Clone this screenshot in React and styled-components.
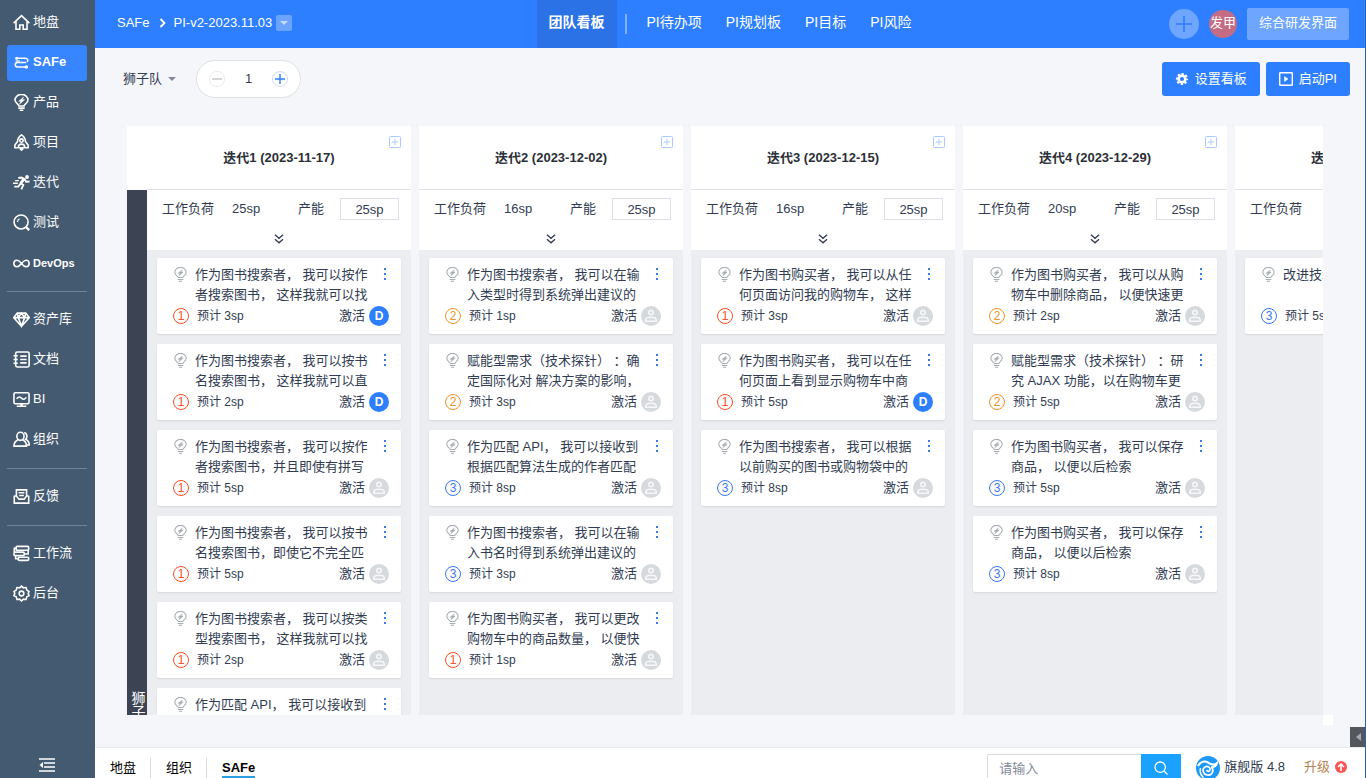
import { useState } from "react";
import styled, { createGlobalStyle, css } from "styled-components";

const teams = [
  {
    title: "迭代1 (2023-11-17)",
    load: "25sp",
    capacity: "25sp",
    cards: [
      { text: "作为图书搜索者， 我可以按作\n者搜索图书， 这样我就可以找", pri: 1, sp: "3sp", user: "D" },
      { text: "作为图书搜索者， 我可以按书\n名搜索图书， 这样我就可以直", pri: 1, sp: "2sp", user: "D" },
      { text: "作为图书搜索者， 我可以按作\n者搜索图书，并且即使有拼写", pri: 1, sp: "5sp" },
      { text: "作为图书搜索者， 我可以按书\n名搜索图书，即使它不完全匹", pri: 1, sp: "5sp" },
      { text: "作为图书搜索者， 我可以按类\n型搜索图书， 这样我就可以找", pri: 1, sp: "2sp" },
      { text: "作为匹配 API， 我可以接收到\n根据匹配算法生成的作者匹配", pri: 1, sp: "8sp" },
    ],
  },
  {
    title: "迭代2 (2023-12-02)",
    load: "16sp",
    capacity: "25sp",
    cards: [
      { text: "作为图书搜索者， 我可以在输\n入类型时得到系统弹出建议的", pri: 2, sp: "1sp" },
      { text: "赋能型需求（技术探针） ：确\n定国际化对 解决方案的影响，", pri: 2, sp: "3sp" },
      { text: "作为匹配 API， 我可以接收到\n根据匹配算法生成的作者匹配", pri: 3, sp: "8sp" },
      { text: "作为图书搜索者， 我可以在输\n入书名时得到系统弹出建议的", pri: 3, sp: "3sp" },
      { text: "作为图书购买者， 我可以更改\n购物车中的商品数量， 以便快", pri: 1, sp: "1sp" },
    ],
  },
  {
    title: "迭代3 (2023-12-15)",
    load: "16sp",
    capacity: "25sp",
    cards: [
      { text: "作为图书购买者， 我可以从任\n何页面访问我的购物车， 这样", pri: 1, sp: "3sp" },
      { text: "作为图书购买者， 我可以在任\n何页面上看到显示购物车中商", pri: 1, sp: "5sp", user: "D" },
      { text: "作为图书搜索者， 我可以根据\n以前购买的图书或购物袋中的", pri: 3, sp: "8sp" },
    ],
  },
  {
    title: "迭代4 (2023-12-29)",
    load: "20sp",
    capacity: "25sp",
    cards: [
      { text: "作为图书购买者， 我可以从购\n物车中删除商品， 以便快速更", pri: 2, sp: "2sp" },
      { text: "赋能型需求（技术探针） ：研\n究 AJAX 功能，以在购物车更", pri: 2, sp: "5sp" },
      { text: "作为图书购买者， 我可以保存\n商品， 以便以后检索", pri: 3, sp: "5sp" },
      { text: "作为图书购买者， 我可以保存\n商品， 以便以后检索", pri: 3, sp: "8sp" },
    ],
  },
  {
    title: "迭代5 (2024-01-12)",
    load: "5sp",
    capacity: "25sp",
    cards: [{ text: "改进技术方案", pri: 3, sp: "5sp" }],
  },
];

const menu = [
  [
    { icon: "home", label: "地盘" },
    { icon: "safe", label: "SAFe", active: true },
    { icon: "bulb", label: "产品" },
    { icon: "rocket", label: "项目" },
    { icon: "run", label: "迭代" },
    { icon: "search", label: "测试" },
    { icon: "infinity", label: "DevOps", narrow: true },
  ],
  [
    { icon: "diamond", label: "资产库" },
    { icon: "doc", label: "文档" },
    { icon: "bi", label: "BI" },
    { icon: "people", label: "组织" },
  ],
  [{ icon: "mail", label: "反馈" }],
  [
    { icon: "flow", label: "工作流" },
    { icon: "gear", label: "后台" },
  ],
];

const shapes = {
  home: <path d="M.6 8.600 8 1.600l7.400 7M2.800 7v7.400h3.600v-4h3.200v4h3.600V7" />,
  safe: (
    <>
      <path d="M3.500 4h8.400a2 2 0 0 1 1.600 3.200M12.500 8H4.200a2.100 2.100 0 0 0 0 4.200h8" />
      <circle cx="3.500" cy="4" r="1.500" fill="currentColor" stroke="none" />
      <circle cx="12.600" cy="12.200" r="1.600" fill="currentColor" stroke="none" />
      <path d="M2.500 6.600h4" strokeWidth="1.200" />
    </>
  ),
  bulb: (
    <>
      <path d="M5.600 11.300C5.600 9.600 1.900 8.800 1.900 5.700a6.100 5.300 0 0 1 12.200 0c0 3.100-3.700 3.900-3.700 5.600z" />
      <path d="M5 13.300h6M6.300 15.300h3.400" />
      <path d="M10 2.800 5.300 6.900h2L6.100 9.600l4.900-4.300H8.900z" fill="currentColor" strokeWidth="0.400" />
    </>
  ),
  rocket: (
    <>
      <path d="M8 .8c2.600 1.700 3.700 4 3.700 6.200l2.500 3.300v2.600H1.800v-2.600L4.300 7C4.300 4.800 5.400 2.500 8 .8z" />
      <circle cx="8" cy="6.200" r="1.600" />
      <path d="M5 12.500c0-2 1-3 3-3s3 1 3 3" />
      <path d="M6.300 12.800h3.400v2L8 16l-1.700-1.200z" fill="currentColor" stroke="none" />
    </>
  ),
  run: (
    <>
      <circle cx="13.200" cy="2.800" r="1.800" fill="currentColor" stroke="none" />
      <path d="M5 3.700 8 3.300l2.800 1.500-3.400 4 2.300 1.600-1.900 4M10.800 4.800l1.600 2.600 3.200-.3M7 9.300l-2 2.600H1.200" strokeWidth="1.800" />
      <path d="M9 4 6 8.500l1.600 1.300L12 5z" fill="currentColor" stroke="none" />
      <path d="M2 6.200h3.500M0 8.700h4.500" strokeWidth="1.200" />
    </>
  ),
  search: (
    <>
      <circle cx="7.600" cy="7.500" r="6.600" />
      <path d="M12.200 12.200l3 3" strokeWidth="2.200" />
      <path d="M4.200 7.500a3.300 3.300 0 0 1 2-3" strokeWidth="1.200" />
    </>
  ),
  infinity: <path d="M8 8C6.700 6.300 5.400 5 3.800 5a3 3 0 0 0 0 6C5.400 11 6.700 9.700 8 8s2.600-3 4.200-3a3 3 0 0 1 0 6C10.600 11 9.300 9.700 8 8z" />,
  diamond: (
    <path d="M4 2h8l3.300 4.200L8 14.500.7 6.200zM.7 6.200h14.600M5 6.200l3 8 3-8L8 2 5 6.200 4 2M11 6.200 12 2" />
  ),
  doc: (
    <>
      <rect x="2.500" y="1" width="12.700" height="14" rx="1.500" />
      <path d="M.5 4.500h4M.5 8h4M.5 11.500h4M6.800 4.800h6M6.800 8h6M6.800 11.200h6" />
    </>
  ),
  bi: (
    <>
      <rect x=".9" y="1.600" width="14.200" height="10.400" rx="1.300" />
      <path d="M3.500 7.500c1.500-2.600 3-2.200 4.500-.8s3 1.500 4.500-.7M3.500 14.400h9" />
      <path d="M8 12v2" strokeWidth="2.500" />
    </>
  ),
  people: (
    <>
      <ellipse cx="7" cy="5" rx="3.400" ry="3.800" />
      <path d="M4.800 8.200C2.500 9.200.9 11 .9 14.200h11.800c0-3.200-1.500-5-3.700-6M10.500 1.500c2.600.3 3.600 4.300 1.300 6.300 2.300 1 3.400 3 3.500 5.400h-2" />
    </>
  ),
  mail: (
    <>
      <path d="M3.200 7.500V1.800h9.600v5.700M1.200 7.200v7h13.600v-7M1.200 7.500h2l2.300 3h5l2.300-3h2" />
      <path d="M5.300 4.500h5.400M5.800 7h4.400" />
    </>
  ),
  flow: (
    <>
      <rect x="3" y="1.300" width="11.700" height="3.700" rx=".8" />
      <rect x="1" y="6.700" width="9.500" height="3.300" rx=".8" />
      <rect x="5" y="11.500" width="9.700" height="3" rx=".8" />
      <path d="M3 3.200H1.200v3.500M10.500 8.400h3.800V5M2.500 10v3H5" />
    </>
  ),
  gear: (
    <>
      <path d="M8 1l1.800 1.700 2.500-.3.700 2.400 2.100 1.300L14.300 8l.8 2-2.100 1.200-.7 2.400-2.500-.3L8 15l-1.800-1.700-2.500.3-.7-2.400L.9 10l.8-2-.8-1.900L3 4.800l.7-2.400 2.500.3z" />
      <circle cx="8" cy="8" r="2.200" />
    </>
  ),
};

function Icon({ name, size = 17, weight = 1.5 }) {
  return (
    <svg width={size} height={size} viewBox="0 0 16 16" fill="none" stroke="currentColor" strokeWidth={weight} aria-hidden="true">
      {shapes[name]}
    </svg>
  );
}

function StoryCard({ card }) {
  return (
    <Card>
      <CardTop>
        <BulbSlot><Icon name="bulb" size={15} weight={1.1} /></BulbSlot>
        <CardText>{card.text}</CardText>
        <DotsButton aria-label="更多">
          <svg width="4" height="14" viewBox="0 0 4 14" fill="currentColor">
            <rect x="1" y="1" width="2" height="2" />
            <rect x="1" y="6" width="2" height="2" />
            <rect x="1" y="11" width="2" height="2" />
          </svg>
        </DotsButton>
      </CardTop>
      <CardFoot>
        <Priority $level={card.pri}>{card.pri}</Priority>
        <Estimate>预计 {card.sp}</Estimate>
        <Status>激活</Status>
        <Assignee $on={Boolean(card.user)}>
          {card.user || (
            <svg width="14" height="14" viewBox="0 0 14 14" fill="none" stroke="#f6f7f8" strokeWidth="1.600">
              <circle cx="7" cy="3.600" r="2.200" />
              <path d="M1.800 12.200v-1.400c0-1.600 1.600-2.600 5.200-2.600s5.200 1 5.200 2.600v1.400z" />
            </svg>
          )}
        </Assignee>
      </CardFoot>
    </Card>
  );
}

function Column({ data }) {
  const [capacity, setCapacity] = useState(data.capacity);
  return (
    <Col>
      <ColHead>
        {data.title}
        <AddCard aria-label="添加">
          <svg width="12" height="12" viewBox="0 0 12 12" fill="none" stroke="currentColor">
            <rect x=".5" y=".5" width="11" height="11" rx="1" />
            <path d="M3 6h6M6 3v6" />
          </svg>
        </AddCard>
      </ColHead>
      <Meta>
        <MetaRow>
          <span>工作负荷</span>
          <Load>{data.load}</Load>
          <span>产能</span>
          <Capacity aria-label="产能" value={capacity} onChange={(e) => setCapacity(e.target.value)} />
        </MetaRow>
        <Expand aria-label="展开">
          <svg width="10" height="10" viewBox="0 0 10 10" fill="none" stroke="currentColor" strokeWidth="1.300">
            <path d="M1 .8l4 3.500L9 .8M1 5.300l4 3.500 4-3.500" />
          </svg>
        </Expand>
      </Meta>
      <ColBody>
        {data.cards.map((card, i) => (
          <StoryCard key={i} card={card} />
        ))}
      </ColBody>
    </Col>
  );
}

function App() {
  const [level, setLevel] = useState(1);
  return (
    <Page>
      <GlobalStyle />
      <Sidebar>
        {menu.map((group, i) => (
          <MenuGroup key={i}>
            {group.map((item) => (
              <li key={item.label}>
                <MenuLink href="#" $active={item.active} $narrow={item.narrow}>
                  <Icon name={item.icon} />
                  <span>{item.label}</span>
                </MenuLink>
              </li>
            ))}
          </MenuGroup>
        ))}
        <FoldButton aria-label="收起">
          <svg width="16" height="14" viewBox="0 0 16 14" fill="none" stroke="currentColor" strokeWidth="1.700">
            <path d="M0 1h16M5 5h11M5 9h11M0 13h16" />
            <path d="M4 4v6L.5 7z" fill="currentColor" stroke="none" />
          </svg>
        </FoldButton>
      </Sidebar>
      <Main>
        <Header>
          <Crumbs>
            <a href="#">SAFe</a>
            <svg width="7" height="10" viewBox="0 0 7 10" fill="none" stroke="currentColor" strokeWidth="1.800">
              <path d="M1.500 1l4 4-4 4" />
            </svg>
            <a href="#">PI-v2-2023.11.03</a>
            <CrumbCaret aria-label="切换">
              <svg width="8" height="4" viewBox="0 0 8 4" fill="currentColor"><path d="M0 0h8L4 4z" /></svg>
            </CrumbCaret>
          </Crumbs>
          <Tabs>
            <Tab href="#" $active>团队看板</Tab>
            <TabLine />
            <Tab href="#">PI待办项</Tab>
            <Tab href="#">PI规划板</Tab>
            <Tab href="#">PI目标</Tab>
            <Tab href="#">PI风险</Tab>
          </Tabs>
          <HeadRight>
            <CreateButton aria-label="新建">
              <svg width="16" height="16" viewBox="0 0 16 16" stroke="currentColor" strokeWidth="1.600"><path d="M0 8h16M8 0v16" /></svg>
            </CreateButton>
            <UserButton>发甲</UserButton>
            <ModeButton>综合研发界面</ModeButton>
          </HeadRight>
        </Header>
        <Toolbar>
          <TeamPick>
            <select aria-label="团队"><option>狮子队</option></select>
            <svg width="8" height="4" viewBox="0 0 8 4" fill="currentColor"><path d="M0 0h8L4 4z" /></svg>
          </TeamPick>
          <Stepper>
            <StepButton aria-label="减少" onClick={() => setLevel(Math.max(1, level - 1))}>
              <svg width="10" height="10" viewBox="0 0 10 10" stroke="currentColor" strokeWidth="1.400"><path d="M0 5h10" /></svg>
            </StepButton>
            <input aria-label="数量" value={level} readOnly />
            <StepButton $on aria-label="增加" onClick={() => setLevel(level + 1)}>
              <svg width="10" height="10" viewBox="0 0 10 10" stroke="currentColor" strokeWidth="1.400"><path d="M0 5h10M5 0v10" /></svg>
            </StepButton>
          </Stepper>
          <Actions>
            <Primary>
              <svg width="14" height="14" viewBox="0 0 14 14" fill="none" stroke="currentColor">
                <circle cx="7" cy="7" r="3.400" strokeWidth="2.600" />
                <circle cx="7" cy="7" r="5.200" strokeWidth="1.800" strokeDasharray="2.200 1.884" strokeDashoffset="1.100" />
              </svg>
              设置看板
            </Primary>
            <Primary>
              <svg width="14" height="14" viewBox="0 0 14 14" fill="none" stroke="currentColor" strokeWidth="1.400">
                <rect x=".7" y=".7" width="12.600" height="12.600" rx=".5" />
                <path d="M5.500 4.500v5L9 7z" fill="currentColor" strokeWidth=".5" />
              </svg>
              启动PI
            </Primary>
          </Actions>
        </Toolbar>
        <BoardArea>
          <Board>
            <Lane>
              <LaneHead />
              <LaneName><span>狮</span><span>子</span><span>队</span></LaneName>
            </Lane>
            <Cols>
              {teams.map((t) => <Column key={t.title} data={t} />)}
            </Cols>
          </Board>
          <Corner />
          <SideTab aria-label="展开侧栏">
            <svg width="5" height="8" viewBox="0 0 5 8" fill="currentColor"><path d="M5 0v8L0 4z" /></svg>
          </SideTab>
        </BoardArea>
        <Footer>
          <FootTabs>
            <FootTab href="#">地盘</FootTab>
            <FootTab href="#">组织</FootTab>
            <FootTab href="#" $active><span>SAFe</span></FootTab>
          </FootTabs>
          <SearchBox>
            <input placeholder="请输入" aria-label="搜索" />
            <button aria-label="搜索">
              <svg width="14" height="14" viewBox="0 0 14 14" fill="none" stroke="currentColor" strokeWidth="1.300">
                <circle cx="6.200" cy="6.200" r="5.200" />
                <path d="M10 10l3.500 3.500" />
              </svg>
            </button>
          </SearchBox>
          <Version href="#">
            <svg width="24" height="24" viewBox="0 0 24 24" fill="none">
              <circle cx="12" cy="12" r="12" fill="#1a98f5" />
              <path d="M2 10C4.500 5.500 9 4.500 12 6.500c3 2.300 6.500 2.500 9 .500-.8 3-3.500 4.500-6 4" stroke="#fff" strokeWidth="2.200" />
              <path d="M16 11.500c2.500 4-.5 8-4.500 7.500-4.500-.5-5.800-5.500-2.800-7.800 3-2 6.500.8 5 3.300-1 1.500-3 .8-2.800-.6" stroke="#fff" strokeWidth="1.700" />
              <path d="M4.500 12c-1 4 .5 7.500 3 9.500" stroke="#fff" strokeWidth="1.400" />
            </svg>
            旗舰版 4.8
          </Version>
          <Upgrade href="#">
            升级
            <svg width="12" height="12" viewBox="0 0 12 12">
              <circle cx="6" cy="6" r="6" fill="#f9544f" />
              <path d="M6 10V3M3 6l3-3 3 3" fill="none" stroke="#fff" strokeWidth="1.600" />
            </svg>
          </Upgrade>
        </Footer>
      </Main>
    </Page>
  );
}

const GlobalStyle = createGlobalStyle`
  * {
    box-sizing: border-box;
  }
  body {
    margin: 0;
    font-family: "Liberation Sans", "Noto Sans CJK SC", sans-serif;
    font-size: 13px;
    line-height: 20px;
    color: #313c52;
    text-spacing-trim: space-all;
  }
  button, input, select {
    font: inherit;
    color: inherit;
    margin: 0;
    padding: 0;
    border: 0;
    background: none;
  }
  button {
    cursor: pointer;
  }
  a {
    color: inherit;
    text-decoration: none;
  }
  svg {
    display: block;
    flex: none;
  }
`;

const Page = styled.div`
  display: flex;
  height: 100vh;
  overflow: hidden;
  background: #f5f6f9;
  border-right: 1px solid #2f5da8;
`;

const Sidebar = styled.nav`
  flex: none;
  width: 95px;
  padding: 5px 8px 6px 7px;
  display: flex;
  flex-direction: column;
  background: #445a71;
  color: #fff;
`;

const MenuGroup = styled.ul`
  list-style: none;
  margin: 0;
  padding: 0;
  display: flex;
  flex-direction: column;
  gap: 4px;
  & + & {
    margin-top: 10px;
    padding-top: 10px;
    border-top: 1px solid #71839a;
  }
`;

const MenuLink = styled.a`
  display: flex;
  align-items: center;
  gap: 3px;
  height: 36px;
  padding: 0 6px 2px;
  border-radius: 3px;
  white-space: nowrap;
  ${(p) => p.$active && css`
    background: #3785ff;
    font-weight: bold;
  `}
  ${(p) => p.$narrow && css`
    padding-bottom: 0;
    font-family: "Liberation Sans Narrow", "Liberation Sans", sans-serif;
    font-size: 11px;
    font-weight: bold;
  `}
`;

const FoldButton = styled.button`
  margin-top: auto;
  align-self: center;
`;

const Main = styled.div`
  flex: 1;
  min-width: 0;
  display: flex;
  flex-direction: column;
`;

const Header = styled.header`
  flex: none;
  display: grid;
  grid-template-columns: 1fr auto 1fr;
  height: 48px;
  background: #2e7fff;
  color: #fff;
`;

const Crumbs = styled.div`
  display: flex;
  align-items: center;
  padding: 0 0 2px 22px;
  svg {
    margin: 0 8px 0 9px;
  }
`;

const CrumbCaret = styled.button`
  width: 16px;
  height: 16px;
  margin-left: 4px;
  border-radius: 2px;
  background: #6aa4ff;
  color: #c3daff;
  svg {
    margin: 0 auto;
  }
`;

const Tabs = styled.nav`
  display: flex;
  align-items: center;
`;

const Tab = styled.a`
  height: 48px;
  padding: 0 12px;
  font-size: 14px;
  line-height: 44px;
  ${(p) => p.$active && css`
    font-weight: bold;
    background: #2a72e5;
  `}
`;

const TabLine = styled.span`
  width: 2px;
  height: 20px;
  margin: 0 8px;
  background: #80b1ff;
`;

const HeadRight = styled.div`
  display: flex;
  align-items: center;
  justify-content: flex-end;
  gap: 10px;
  padding-right: 16px;
`;

const CreateButton = styled.button`
  display: grid;
  place-items: center;
  width: 30px;
  height: 30px;
  border-radius: 50%;
  background: #6da5ff;
  color: #2e7fff;
`;

const UserButton = styled.button`
  width: 28px;
  height: 28px;
  padding-bottom: 2px;
  border-radius: 50%;
  background: #c46c83;
  color: #fff;
  white-space: nowrap;
`;

const ModeButton = styled.button`
  width: 102px;
  height: 32px;
  padding-bottom: 2px;
  border-radius: 2px;
  background: #6da5ff;
  color: #fff;
`;

const Toolbar = styled.div`
  flex: none;
  display: flex;
  align-items: center;
  padding: 12px 15px 28px 28px;
`;

const TeamPick = styled.label`
  display: flex;
  align-items: center;
  gap: 5px;
  color: #838a9d;
  select {
    appearance: none;
    outline: none;
    color: #313c52;
  }
`;

const Stepper = styled.div`
  display: flex;
  align-items: center;
  justify-content: space-between;
  width: 105px;
  height: 38px;
  margin-left: 20px;
  padding: 0 12px;
  border: 1px solid #dfe1e8;
  border-radius: 19px;
  background: #fff;
  input {
    width: 24px;
    text-align: center;
    outline: none;
  }
`;

const StepButton = styled.button`
  display: grid;
  place-items: center;
  width: 16px;
  height: 16px;
  border: 1px solid ${(p) => (p.$on ? "#cfd9ee" : "#ebebee")};
  border-radius: 50%;
  color: ${(p) => (p.$on ? "#2e7fff" : "#c0c2c6")};
`;

const Actions = styled.div`
  display: flex;
  gap: 6px;
  margin-left: auto;
`;

const Primary = styled.button`
  display: flex;
  align-items: center;
  gap: 6px;
  height: 34px;
  padding: 0 13px;
  border-radius: 3px;
  background: #2e7fff;
  color: #fff;
`;

const BoardArea = styled.div`
  position: relative;
  flex: 1;
  min-height: 0;
  display: grid;
  grid-template-columns: minmax(0, 1fr) 10px;
  grid-template-rows: minmax(0, 1fr) 10px;
  padding: 0 32px 22px;
`;

const Board = styled.div`
  display: flex;
  align-items: flex-start;
  overflow: hidden;
`;

const Corner = styled.div`
  grid-area: 2 / 2;
  background: #fff;
`;

const SideTab = styled.button`
  position: absolute;
  right: 0;
  bottom: 0;
  width: 15px;
  height: 20px;
  padding-left: 6px;
  background: #54575d;
  color: #a5a7ab;
`;

const Lane = styled.div`
  flex: none;
  width: 20px;
`;

const LaneHead = styled.div`
  height: 64px;
  background: #fff;
`;

const LaneName = styled.div`
  display: flex;
  flex-direction: column;
  align-items: center;
  justify-content: center;
  height: 1040px;
  padding: 3px 0 0 3px;
  background: #3c4353;
  color: #fff;
  font-size: 14px;
  line-height: 14px;
`;

const Cols = styled.div`
  flex: none;
  align-self: stretch;
  display: flex;
  gap: 8px;
  min-height: 1104px;
`;

const Col = styled.section`
  display: flex;
  flex-direction: column;
  width: 264px;
`;

const ColHead = styled.header`
  position: relative;
  display: flex;
  align-items: center;
  justify-content: center;
  height: 64px;
  border-bottom: 1px solid #e1e2e6;
  background: #fff;
  color: #2b2f38;
  font-weight: bold;
`;

const AddCard = styled.button`
  position: absolute;
  top: 10px;
  right: 10px;
  color: #a9cbff;
`;

const Meta = styled.div`
  height: 60px;
  padding-top: 8px;
  background: #fff;
`;

const MetaRow = styled.div`
  display: grid;
  grid-template-columns: 70px 66px 42px 1fr;
  align-items: center;
  height: 22px;
  padding: 0 12px 0 15px;
`;

const Load = styled.span`
  width: 28px;
  text-align: center;
`;

const Capacity = styled.input`
  width: 100%;
  height: 22px;
  border: 1px solid #dcdfe6;
  text-align: center;
  outline: none;
`;

const Expand = styled.button`
  display: block;
  margin: 14px auto 0;
`;

const ColBody = styled.div`
  flex: 1;
  display: flex;
  flex-direction: column;
  gap: 10px;
  padding: 8px 10px;
  background: #ecedf1;
`;

const Card = styled.article`
  display: flex;
  flex-direction: column;
  height: 76px;
  padding: 7px 12px 8px 16px;
  border-radius: 2px;
  background: #fff;
  box-shadow: 0 1px 2px rgba(0, 0, 0, 0.1);
`;

const CardTop = styled.div`
  display: flex;
  height: 40px;
`;

const BulbSlot = styled.span`
  width: 22px;
  padding-top: 2px;
  color: #a6abb5;
`;

const CardText = styled.div`
  flex: 1;
  height: 40px;
  overflow: hidden;
  white-space: pre;
`;

const DotsButton = styled.button`
  align-self: flex-start;
  width: 6px;
  padding-top: 2px;
  color: #3a7cf0;
`;

const CardFoot = styled.div`
  display: flex;
  align-items: center;
  height: 21px;
`;

const priColors = { 1: "#fb4f24", 2: "#ee9125", 3: "#3a78ee" };

const Priority = styled.span`
  width: 16px;
  height: 16px;
  border: 1px solid;
  border-radius: 50%;
  color: ${(p) => priColors[p.$level]};
  font-size: 12px;
  line-height: 14px;
  text-align: center;
`;

const Estimate = styled.span`
  flex: 1;
  margin-left: 8px;
  font-size: 12px;
`;

const Status = styled.span`
  margin-right: 4px;
`;

const Assignee = styled.span`
  display: grid;
  place-items: center;
  width: 20px;
  height: 20px;
  border-radius: 50%;
  background: ${(p) => (p.$on ? "#2e7fff" : "#d6d9dd")};
  color: #fff;
  font-size: 12px;
  font-weight: bold;
`;

const Footer = styled.footer`
  flex: none;
  display: flex;
  align-items: flex-start;
  height: 31px;
  padding-right: 18px;
  border-top: 1px solid #e9ebef;
  background: #fff;
  overflow: hidden;
`;

const FootTabs = styled.nav`
  display: flex;
  flex: 1;
  padding-top: 10px;
`;

const FootTab = styled.a`
  padding: 0 14px 0 15px;
  color: #000;
  & + & {
    border-left: 1px solid #d9d9d9;
  }
  ${(p) => p.$active && css`
    font-weight: bold;
    span {
      display: block;
      height: 20px;
      border-bottom: 2px solid #2b9fe0;
    }
  `}
`;

const SearchBox = styled.div`
  display: flex;
  margin-top: 6px;
  input {
    width: 154px;
    height: 28px;
    padding: 0 11px;
    border: 1px solid #d8dbde;
    border-right: 0;
    border-radius: 2px 0 0 2px;
    outline: none;
  }
  input::placeholder {
    color: #838a9d;
  }
  button {
    display: grid;
    place-items: center;
    width: 40px;
    height: 28px;
    background: #1ba1ff;
    color: #fff;
  }
`;

const Version = styled.a`
  display: flex;
  align-items: center;
  gap: 4px;
  margin: 8px 0 0 15px;
  svg {
    margin-bottom: -2px;
  }
`;

const Upgrade = styled.a`
  display: flex;
  align-items: center;
  gap: 5px;
  margin: 9px 0 0 19px;
  color: #b5844f;
`;

export default App;
